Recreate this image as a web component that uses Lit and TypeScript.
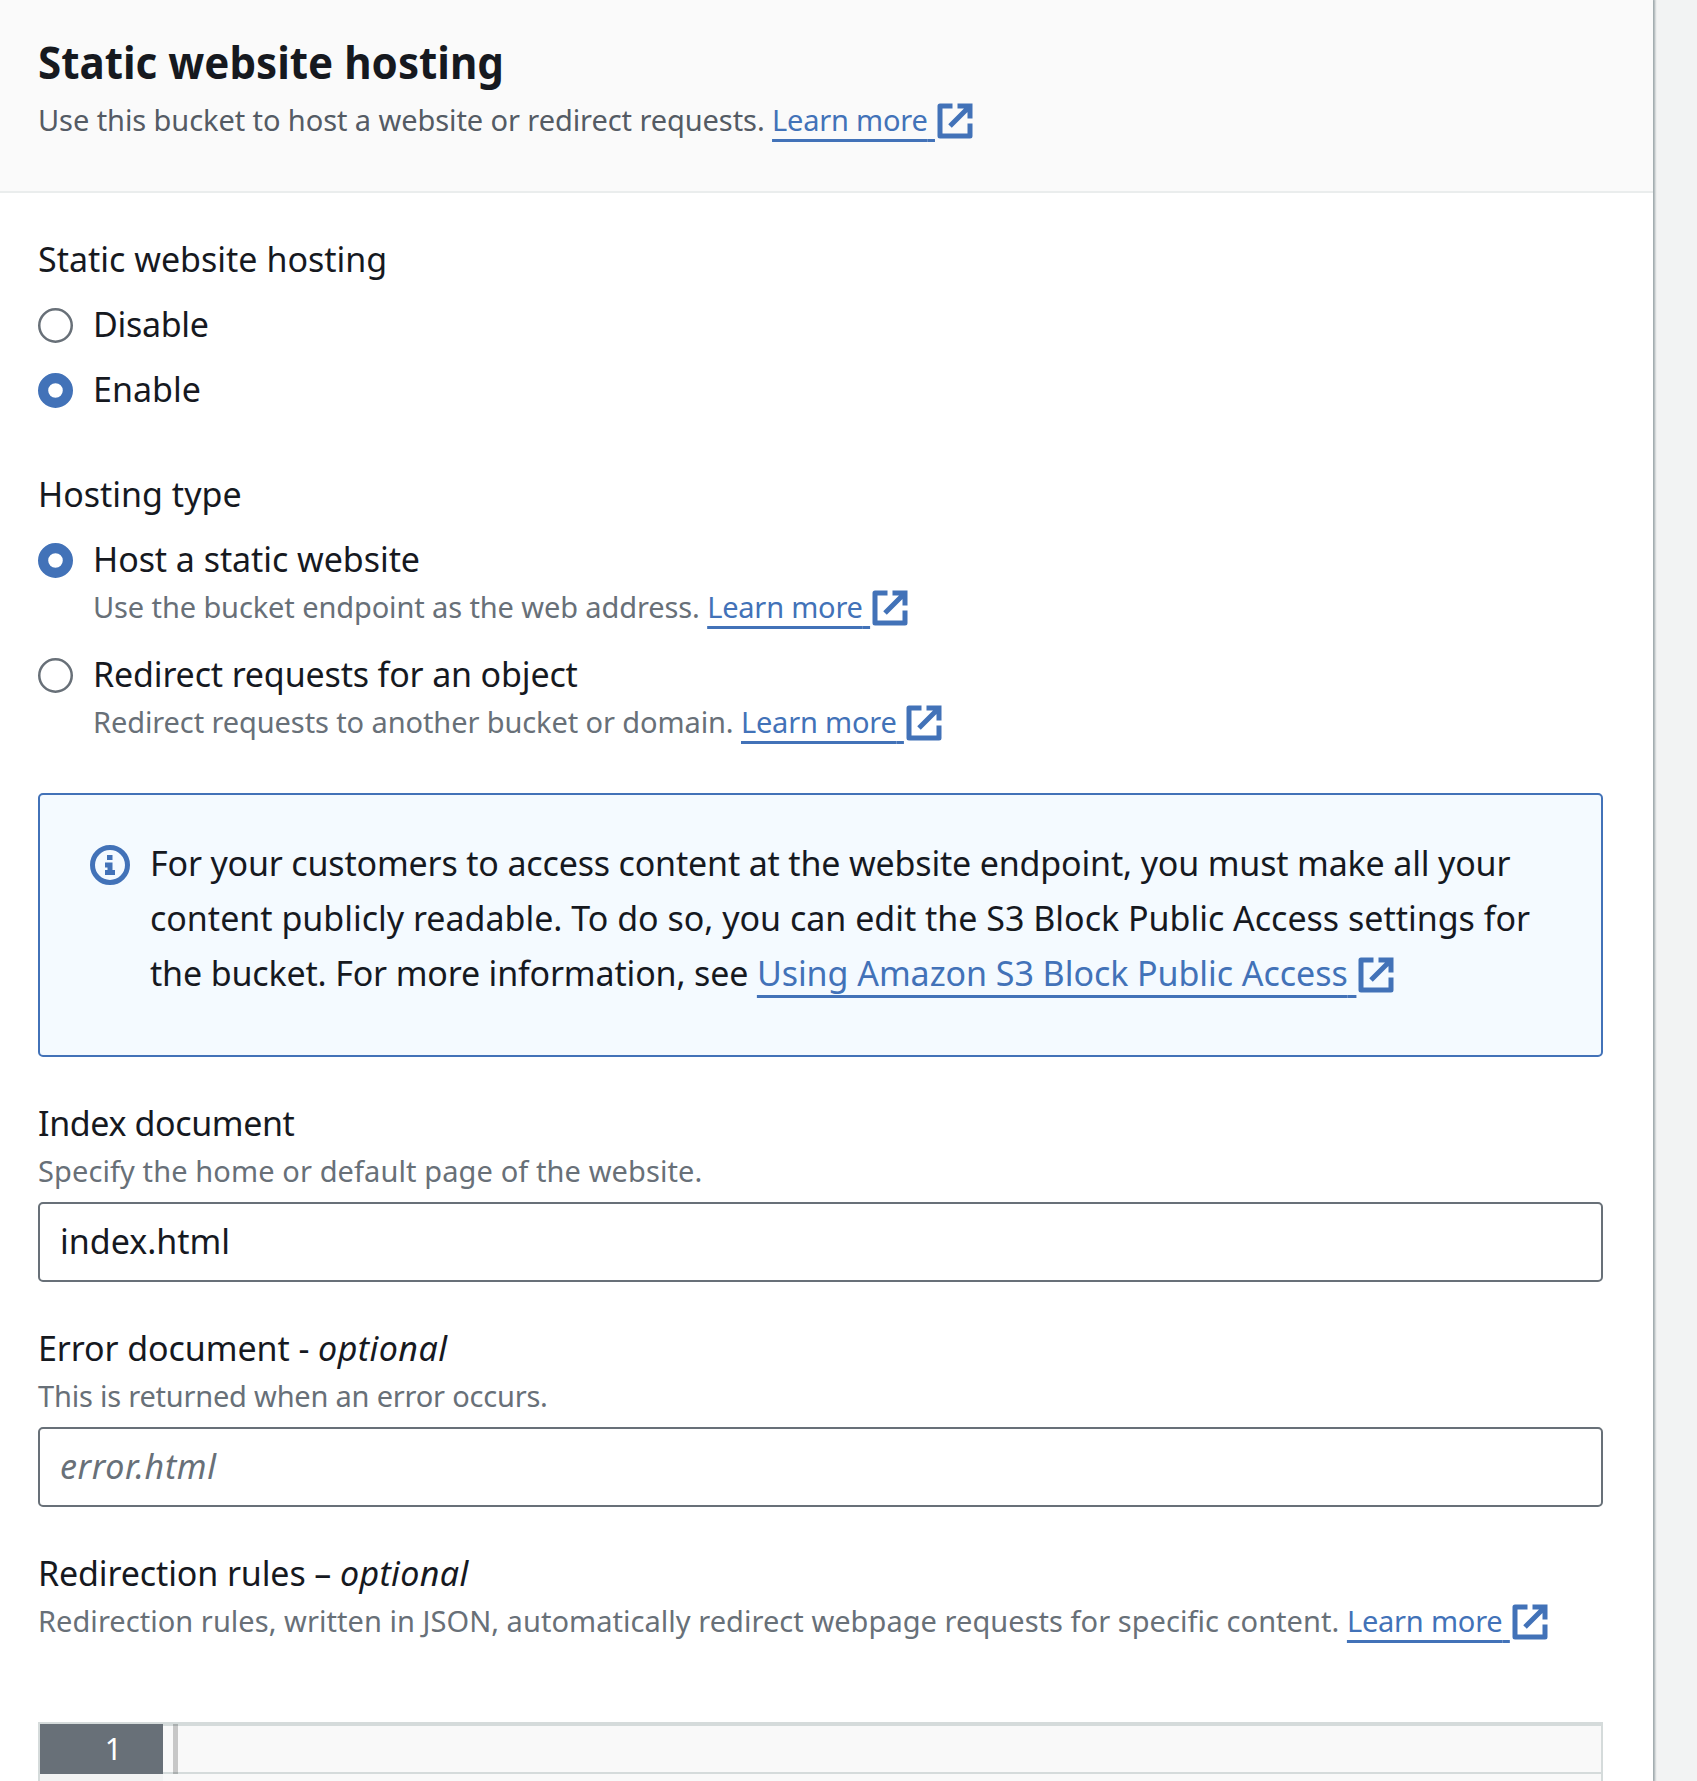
import { LitElement, html, css, nothing } from 'lit';
import { styleMap } from 'lit/directives/style-map.js';

const externalIcon = html`<svg class="ext" viewBox="0 0 16 16" aria-hidden="true">
  <path d="M9 2h5v5M6 10l8-8" />
  <path stroke-linejoin="round" d="M14 9v5H2V2h5" />
</svg>`;

const link = (text: string, tracking = -0.21) =>
  html`<a class="link"><span class="link-text" style=${styleMap({ letterSpacing: `${tracking}px` })}>${text}&nbsp;</span>${externalIcon}</a>`;

// A run of text with its own tracking, in pixels.
const run = (text: string, tracking = 0, italic = false) =>
  html`<span class=${italic ? 'italic' : 'roman'} style=${styleMap({ letterSpacing: `${tracking}px` })}>${text}</span>`;

const radio = (on: boolean) => html`<svg class="radio" viewBox="0 0 35 35" role="radio" aria-checked=${on ? 'true' : 'false'}>
  ${on
    ? html`<svg viewBox="0 0 35 35"><circle cx="17.5" cy="17.5" r="12.4" fill="#fff" stroke="#4272b8" stroke-width="10.2" /></svg>`
    : html`<svg viewBox="0 0 35 35"><circle cx="17.5" cy="17.5" r="16.25" fill="#fff" stroke="#687078" stroke-width="2.5" /></svg>`}
</svg>`;

class AppRoot extends LitElement {
  static styles = css`
    :host { display: block; font-family: 'Noto Sans', 'Open Sans', sans-serif; color: #16191f; }
    .page { display: flex; height: 1781px; overflow: hidden; background: #f2f3f3; }
    .card { width: 1653px; box-sizing: border-box; background: #fff; box-shadow: 1px 0 2px 1px rgba(0, 28, 36, 0.35); display: flex; flex-direction: column; }
    .header { height: 193px; box-sizing: border-box; padding: 34px 38px 0; background: #fafafa; border-bottom: 2px solid #eaeded; flex: none; }
    h2 { margin: 0 0 8px; font-size: 45px; line-height: 55px; font-weight: 700; width: max-content; transform: scaleX(0.936); transform-origin: left; white-space: nowrap; }
    .desc { font-size: 29px; line-height: 45px; height: 45px; color: #687078; white-space: pre; }
    .header .desc { color: #545b64; }
    .body { padding: 41px 50px 0 38px; display: flex; flex-direction: column; }
    .label { font-size: 34px; line-height: 50px; height: 50px; white-space: pre; }
    .options { display: flex; flex-direction: column; gap: 15px; margin-top: 15px; }
    .options.tall { gap: 20px; }
    .group + .group { margin-top: 55px; }
    .option { display: flex; gap: 20px; }
    .radio { width: 35px; height: 35px; margin-top: 9px; flex: none; display: block; }
    .italic { font-style: italic; }
    .link { color: #4272b8; }
    .link-text { text-decoration: underline; text-decoration-thickness: 3px; text-underline-offset: 8px; text-decoration-skip-ink: none; }
    .ext { width: 40px; height: 40px; vertical-align: -10px; fill: none; stroke: #4272b8; stroke-width: 2; }
    .info { margin-top: 49px; height: 264px; box-sizing: border-box; border: 2px solid #4272b8; border-radius: 5px; background: #f4faff; padding: 41px 50px 0; display: flex; gap: 20px; font-size: 34px; line-height: 55px; }
    .info-icon { width: 40px; height: 40px; margin-top: 9px; flex: none; }
    .line { white-space: pre; height: 55px; }
    .info .ext { vertical-align: -9px; }
    .info .link-text { text-underline-offset: 9px; }
    .field { margin-top: 41px; }
    .input { margin-top: 9px; height: 80px; box-sizing: border-box; border: 2px solid #687078; border-radius: 5px; padding: 0 20px; font-size: 34px; line-height: 74px; white-space: pre; }
    .placeholder { color: #687078; }
    .editor { margin-top: 79px; height: 100px; box-sizing: border-box; border: 2px solid #d5dbdb; display: flex; background: #f9f9f9; }
    .gutter { width: 123px; background: #f2f3f3; flex: none; }
    .num { height: 50px; box-sizing: border-box; padding-right: 41px; background: #687078; color: #fff; font-size: 30px; line-height: 50px; text-align: right; }
    .code { flex: 1; height: 50px; box-sizing: border-box; border-top: 2px solid #d5dbdb; border-bottom: 2px solid #d5dbdb; padding-left: 10px; }
    .cursor { width: 5px; height: 50px; margin-top: -2px; background: rgba(0, 0, 0, 0.2); }
  `;

  private option(on: boolean, label: string, tracking: number, detail: unknown = nothing) {
    return html`<div class="option">${radio(on)}<div>
      <div class="label">${run(label, tracking)}</div>${detail}
    </div></div>`;
  }

  render() {
    return html`<div class="page"><div class="card">
      <div class="header">
        <h2>Static website hosting</h2>
        <div class="desc">${run('Use this bucket to host a website or redirect requests. ', -0.08)}${link('Learn more')}</div>
      </div>
      <div class="body">
        <div class="group">
          <div class="label">${run('Static website hosting')}</div>
          <div class="options">
            ${this.option(false, 'Disable', -0.3)}
            ${this.option(true, 'Enable', 0)}
          </div>
        </div>
        <div class="group">
          <div class="label">${run('Hosting type')}</div>
          <div class="options tall">
            ${this.option(true, 'Host a static website', -0.06,
              html`<div class="desc">${run('Use the bucket endpoint as the web address. ', -0.11)}${link('Learn more')}</div>`)}
            ${this.option(false, 'Redirect requests for an object', -0.15,
              html`<div class="desc">${run('Redirect requests to another bucket or domain. ', -0.1)}${link('Learn more')}</div>`)}
          </div>
        </div>
        <div class="info">
          <svg class="info-icon" viewBox="0 0 40 40"><circle cx="20" cy="20" r="17.5" fill="none" stroke="#4272b8" stroke-width="5" /><path fill="#4272b8" d="M17 10h5.500v5H17zM15 17.500h7.500v7.500H25v5H15v-5h2.500v-2.500H15z" /></svg>
          <div>
            <div class="line">${run('For your customers to access content at the website endpoint, you must make all your', -0.17)}</div>
            <div class="line">${run('content publicly readable. To do so, you can edit the S3 Block Public Access settings for', -0.01)}</div>
            <div class="line">${run('the bucket. For more information, see ', -0.16)}${link('Using Amazon S3 Block Public Access', -0.055)}</div>
          </div>
        </div>
        <div class="field">
          <div class="label">${run('Index document', -0.38)}</div>
          <div class="desc">${run('Specify the home or default page of the website.', 0.1)}</div>
          <div class="input">${run('index.html')}</div>
        </div>
        <div class="field">
          <div class="label">${run('Error document - ', -0.08)}${run('optional', 0.43, true)}</div>
          <div class="desc">${run('This is returned when an error occurs.', -0.21)}</div>
          <div class="input placeholder">${run('error.html', 0.65, true)}</div>
        </div>
        <div class="field">
          <div class="label">${run('Redirection rules – ', -0.12)}${run('optional', 0.35, true)}</div>
          <div class="desc">${run('Redirection rules, written in JSON, automatically redirect webpage requests for specific content. ', 0.043)}${link('Learn more')}</div>
        </div>
        <div class="editor"><div class="gutter"><div class="num">1</div></div><div class="code"><div class="cursor"></div></div></div>
      </div>
    </div></div>`;
  }
}
customElements.define('app-root', AppRoot);
